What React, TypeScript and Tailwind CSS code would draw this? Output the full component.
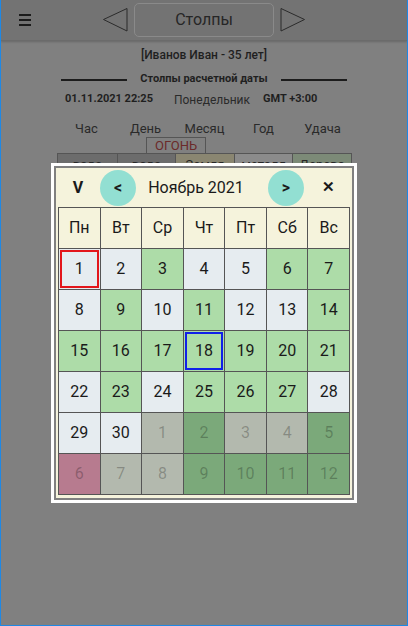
import React from "react";

type Tone = "light" | "green" | "gray" | "dark" | "pink";

const toneClass: Record<Tone, string> = {
  light: "bg-[#e6ecf0] text-[#1a1a1a]",
  green: "bg-[#addca8] text-[#1a1a1a]",
  gray: "bg-[#b3b9ae] text-black/25",
  dark: "bg-[#7ba97a] text-black/25",
  pink: "bg-[#b77b8f] text-black/25",
};

const L: Tone = "light";
const G: Tone = "green";
const S: Tone = "gray";
const D: Tone = "dark";
const P: Tone = "pink";

const weekDays = ["Пн", "Вт", "Ср", "Чт", "Пт", "Сб", "Вс"];

const days: { n: number; tone: Tone; mark?: "today" | "selected" }[] = [
  { n: 1, tone: L, mark: "today" },
  { n: 2, tone: L },
  { n: 3, tone: G },
  { n: 4, tone: L },
  { n: 5, tone: L },
  { n: 6, tone: G },
  { n: 7, tone: G },
  { n: 8, tone: L },
  { n: 9, tone: G },
  { n: 10, tone: L },
  { n: 11, tone: G },
  { n: 12, tone: L },
  { n: 13, tone: L },
  { n: 14, tone: G },
  { n: 15, tone: G },
  { n: 16, tone: G },
  { n: 17, tone: G },
  { n: 18, tone: G, mark: "selected" },
  { n: 19, tone: G },
  { n: 20, tone: G },
  { n: 21, tone: G },
  { n: 22, tone: L },
  { n: 23, tone: G },
  { n: 24, tone: L },
  { n: 25, tone: G },
  { n: 26, tone: G },
  { n: 27, tone: G },
  { n: 28, tone: L },
  { n: 29, tone: L },
  { n: 30, tone: L },
  { n: 1, tone: S },
  { n: 2, tone: D },
  { n: 3, tone: S },
  { n: 4, tone: S },
  { n: 5, tone: D },
  { n: 6, tone: P },
  { n: 7, tone: S },
  { n: 8, tone: S },
  { n: 9, tone: D },
  { n: 10, tone: D },
  { n: 11, tone: D },
  { n: 12, tone: D },
];

const elements = [
  { label: "вода", cls: "bg-[#6c6c6c]" },
  { label: "вода", cls: "bg-[#6c6c6c]" },
  { label: "Земля", cls: "bg-[#8a8671]" },
  { label: "металл", cls: "bg-[#8b8b8b]" },
  { label: "Дерево", cls: "bg-[#7c8a77]" },
];

function Triangle({ dir }: { dir: "left" | "right" }) {
  return (
    <svg width="26" height="26" viewBox="0 0 26 26" className="block">
      {dir === "left" ? (
        <polygon points="1.5,12.5 25,1.5 25,24" fill="none" stroke="#2b2b2b" strokeWidth="1" strokeLinejoin="round" />
      ) : (
        <polygon points="24.5,12.5 1,1.5 1,24" fill="none" stroke="#2b2b2b" strokeWidth="1" strokeLinejoin="round" />
      )}
    </svg>
  );
}

function Calendar() {
  return (
    <div className="w-[306px] bg-white p-[3px]">
      <div className="border-2 border-[#808080] bg-[#f5f3dc] px-[2px] pb-[3px]">
        <div className="flex h-[39px] items-center text-[#1a1a1a]">
          <div className="w-[42px] pr-[2px] text-center text-[16px] font-bold">V</div>
          <button className="flex h-9 w-9 items-center justify-center rounded-full bg-[#92dfd2] text-[16px] font-bold">
            &lt;
          </button>
          <div className="flex-1 pr-[12px] text-center text-[16px]">Ноябрь 2021</div>
          <button className="flex h-9 w-9 items-center justify-center rounded-full bg-[#92dfd2] text-[16px] font-bold">
            &gt;
          </button>
          <div className="w-[46px] pl-[3px] text-center text-[15px] font-bold">✕</div>
        </div>
        <div className="grid grid-cols-7 gap-px border border-[#555] bg-[#555]">
          {weekDays.map((d) => (
            <div key={d} className="flex h-10 items-center justify-center bg-[#f5f3dc] text-[16px] text-[#1a1a1a]">
              {d}
            </div>
          ))}
          {days.map((d, i) => (
            <div key={i} className={`flex h-10 ${toneClass[d.tone]}`}>
              <div
                className={`m-px flex flex-1 items-center justify-center border-2 text-[16px] ${
                  d.mark === "today"
                    ? "border-[#e3161b]"
                    : d.mark === "selected"
                      ? "border-[#1020e8]"
                      : "border-transparent"
                }`}
              >
                {d.n}
              </div>
            </div>
          ))}
        </div>
      </div>
    </div>
  );
}

export default function App() {
  return (
    <div
      className="relative h-[626px] w-[408px] overflow-hidden border-x border-b border-[#1e88e5] bg-[#808080] text-[#1f1f1f]"
      style={{ fontFamily: "Roboto, 'Noto Sans', sans-serif" }}
    >
      <header className="grid h-[41px] grid-cols-[1fr_auto_1fr] items-center border-b border-[#6b6b6b] bg-[#737373] shadow-[0_1px_2px_rgba(0,0,0,0.2)]">
        <div className="pl-[18px]">
          <div className="flex w-[12px] flex-col gap-[3px]">
            <span className="h-[2px] bg-[#1c1c1c]" />
            <span className="h-[2px] bg-[#1c1c1c]" />
            <span className="h-[2px] bg-[#1c1c1c]" />
          </div>
        </div>
        <div className="flex items-center gap-[6px]">
          <Triangle dir="left" />
          <div className="flex h-[34px] w-[140px] items-center justify-center rounded-[5px] border border-[#8a8a8a] text-[16px] text-[#262626]">
            Столпы
          </div>
          <Triangle dir="right" />
        </div>
        <div />
      </header>

      <div className="flex h-[27px] items-center justify-center text-[12px] font-medium">[Иванов Иван - 35 лет]</div>

      <div className="flex h-[23px] items-center justify-center gap-[13px]">
        <span className="h-[2px] w-[66px] bg-[#1c1c1c]" />
        <span className="text-[11px] font-bold">Столпы расчетной даты</span>
        <span className="h-[2px] w-[66px] bg-[#1c1c1c]" />
      </div>

      <div className="flex h-[17px] items-center pl-[64px] text-[11px]">
        <span className="font-bold">01.11.2021 22:25</span>
        <span className="ml-[21px] text-[12px] text-[#2a2a2a]">Понедельник</span>
        <span className="ml-[13px] font-bold">GMT +3:00</span>
      </div>

      <div className="ml-[56px] mt-[11px] w-[295px]">
        <div className="grid h-[18px] grid-cols-5 items-center text-center text-[13px] text-[#2a2a2a]">
          <span>Час</span>
          <span>День</span>
          <span>Месяц</span>
          <span>Год</span>
          <span>Удача</span>
        </div>
        <div className="flex h-[16px]">
          <div className="ml-[89px] flex w-[60px] items-center justify-center border border-b-0 border-[#555] text-[13px] text-[#6b2a2a]">
            ОГОНЬ
          </div>
        </div>
        <div className="grid grid-cols-5 border border-[#555]">
          {elements.map((e, i) => (
            <div
              key={i}
              className={`flex h-[22px] items-center justify-center border-[#555] text-[13px] text-[#262626] ${e.cls} ${i > 0 ? "border-l" : ""}`}
            >
              {e.label}
            </div>
          ))}
        </div>
      </div>

      <div className="absolute inset-0 flex items-start justify-center pt-[163px]">
        <Calendar />
      </div>
    </div>
  );
}
